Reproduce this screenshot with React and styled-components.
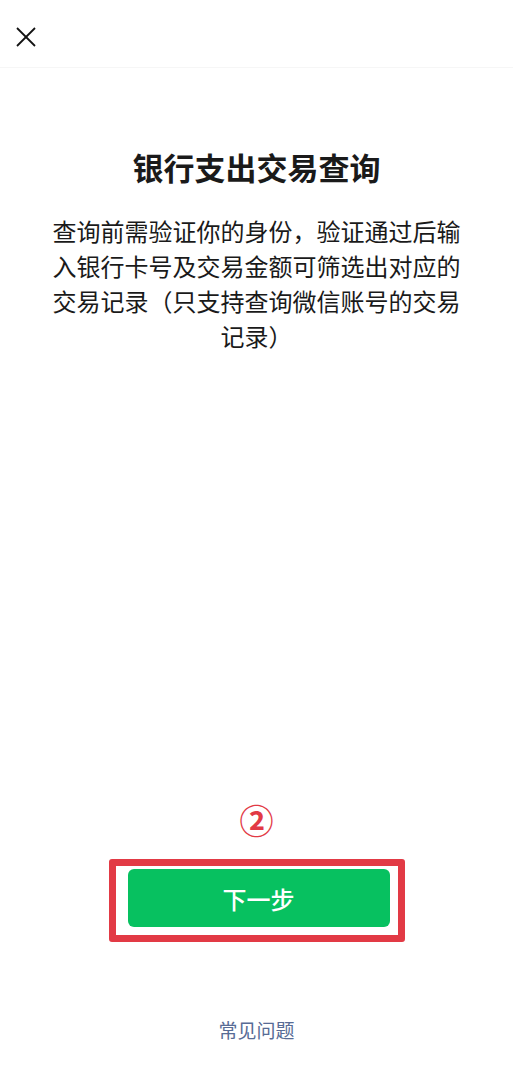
import React from "react";
import styled, { createGlobalStyle } from "styled-components";

const GlobalStyle = createGlobalStyle`
  html, body {
    margin: 0;
    padding: 0;
    background: #ffffff;
  }
  body {
    font-family: "Noto Sans CJK SC", "Noto Sans", sans-serif;
    color: #1a1a1a;
  }
`;

const App = () => {
  return (
    <>
      <GlobalStyle />
      <Page>
        <Header>
          <CloseButton aria-label="close">
            <svg width="20" height="20" viewBox="0 0 20 20">
              <line x1="1" y1="1" x2="19" y2="19" stroke="#111" strokeWidth="1.8" />
              <line x1="19" y1="1" x2="1" y2="19" stroke="#111" strokeWidth="1.8" />
            </svg>
          </CloseButton>
        </Header>
        <Main>
          <Title>银行支出交易查询</Title>
          <Desc>
            查询前需验证你的身份，验证通过后输入银行卡号及交易金额可筛选出对应的交易记录（只支持查询微信账号的交易记录）
          </Desc>
        </Main>
        <Footer>
          <StepMark>②</StepMark>
          <Highlight>
            <NextButton>下一步</NextButton>
          </Highlight>
          <FaqLink href="#">常见问题</FaqLink>
        </Footer>
      </Page>
    </>
  );
};

export default App;

const Page = styled("div")`
  height: 100vh;
  display: flex;
  flex-direction: column;
`;

const Header = styled("div")`
  height: 67px;
  display: flex;
  align-items: center;
  padding: 0 16px;
  border-bottom: 1px solid #f6f6f6;
  flex-shrink: 0;
`;

const CloseButton = styled("button")`
  border: none;
  background: none;
  padding: 0;
  width: 20px;
  height: 20px;
  display: flex;
  margin-top: 6px;
`;

const Main = styled("div")`
  flex: 1;
  display: flex;
  flex-direction: column;
  align-items: center;
  padding: 0 50px;
`;

const Title = styled("h1")`
  margin: 77px 0 0;
  font-size: 31px;
  font-weight: 700;
  line-height: 44px;
  color: #1a1a1a;
  text-align: center;
`;

const Desc = styled("p")`
  margin: 24px 0 0;
  font-size: 24px;
  line-height: 35px;
  color: #1a1a1a;
  text-align: center;
  width: 413px;
`;

const Footer = styled("div")`
  display: flex;
  flex-direction: column;
  align-items: center;
  padding-bottom: 36px;
`;

const StepMark = styled("div")`
  font-size: 34px;
  line-height: 40px;
  font-weight: 700;
  color: #e23a45;
  margin-bottom: 19px;
`;

const Highlight = styled("div")`
  border: 7px solid #e23a45;
  border-radius: 3px;
  padding: 3px 8px 8px 12px;
  width: 262px;
`;

const NextButton = styled("button")`
  width: 262px;
  height: 58px;
  border: none;
  border-radius: 6px;
  background: #07c160;
  color: #ffffff;
  font-family: "Noto Sans CJK SC", sans-serif;
  font-size: 24px;
  font-weight: 500;
  display: block;
`;

const FaqLink = styled("a")`
  margin-top: 74px;
  font-size: 19px;
  line-height: 28px;
  color: #576b95;
  text-decoration: none;
`;
